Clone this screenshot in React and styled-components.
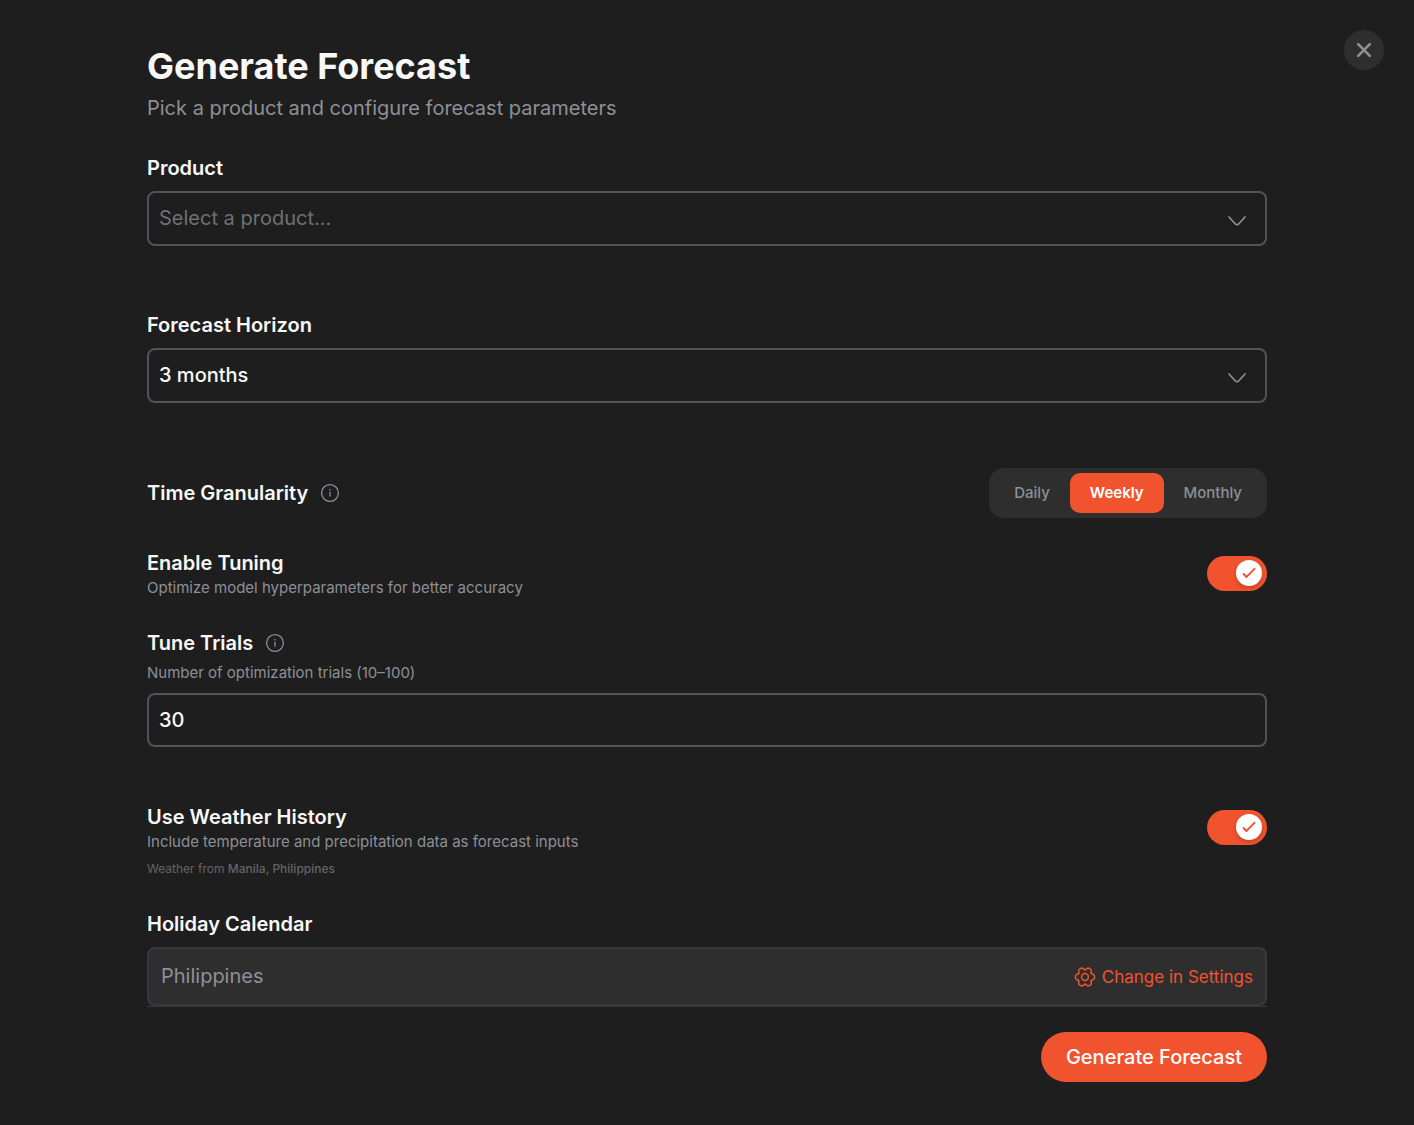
import React, { useState } from 'react';
import styled, { createGlobalStyle } from 'styled-components';

const theme = {
	background: '#1e1e1e',
	surface: '#2e2e2e',
	border: '#50545a',
	borderMuted: '#363a3f',
	white: '#f8f8f8',
	grey: '#8d9097',
	placeholder: '#6f7175',
	darkGrey: '#636468',
	orange: '#f1532f',
};

const GlobalStyle = createGlobalStyle`
	*, *::before, *::after {
		box-sizing: border-box;
	}
	body {
		margin: 0;
		background: ${theme.background};
		color: ${theme.white};
		font-family: 'Inter', sans-serif;
	}
	button, input, select {
		font-family: inherit;
		margin: 0;
	}
	h1, p {
		margin: 0;
	}
`;

const Modal = styled.main`
	position: relative;
	min-height: 100vh;
	padding: 44px 32px;
	background: ${theme.background};
`;

const CloseButton = styled.button`
	position: absolute;
	top: 30px;
	right: 30px;
	display: flex;
	align-items: center;
	justify-content: center;
	width: 40px;
	height: 40px;
	padding: 0;
	border: 0;
	border-radius: 50%;
	background: ${theme.surface};
	color: ${theme.grey};
	cursor: pointer;
`;

const Form = styled.form`
	display: flex;
	flex-direction: column;
	max-width: 1120px;
	margin: 0 auto;
`;

const Header = styled.header`
	margin-bottom: 25px;

	h1 {
		font-size: 36px;
		font-weight: 700;
		line-height: 44px;
	}
	p {
		color: ${theme.grey};
		font-size: 20px;
		line-height: 40px;
	}
`;

const Field = styled.div`
	display: flex;
	flex-direction: column;
	margin-bottom: ${props => props.$gap}px;
`;

const Row = styled.div`
	display: flex;
	align-items: center;
	justify-content: space-between;
	margin-bottom: ${props => props.$gap}px;
`;

const LabelRow = styled.div`
	display: flex;
	align-items: center;
	gap: 12px;
	color: ${theme.grey};
`;

const Label = styled.label`
	color: ${theme.white};
	font-size: 20px;
	font-weight: 600;
	line-height: 30px;
`;

const Hint = styled.p`
	color: ${theme.grey};
	font-size: 15px;
	line-height: ${props => props.$line || 20}px;
`;

const Note = styled.p`
	color: ${theme.darkGrey};
	font-size: 12px;
	line-height: 20px;

	strong {
		font-weight: 500;
	}
`;

const SelectBox = styled.div`
	display: grid;
	align-items: center;
	margin-top: 8px;
	color: ${theme.grey};

	> * {
		grid-area: 1 / 1;
	}
	svg {
		justify-self: end;
		margin-right: 20px;
		margin-top: 4px;
		pointer-events: none;
	}
`;

const Select = styled.select`
	appearance: none;
	width: 100%;
	height: 55px;
	padding: 0 48px 2px 10px;
	border: 2px solid ${theme.border};
	border-radius: 8px;
	background: ${theme.background};
	color: ${props => (props.$empty ? theme.placeholder : theme.white)};
	font-size: 20px;
	font-weight: ${props => (props.$empty ? 400 : 500)};
`;

const Input = styled.input`
	width: 100%;
	height: 54px;
	margin-top: 5px;
	padding: 0 10px;
	border: 2px solid ${theme.border};
	border-radius: 8px;
	background: ${theme.background};
	color: ${theme.white};
	font-size: 20px;
	font-weight: 500;
`;

const Segmented = styled.div`
	display: flex;
	padding: 5px;
	border-radius: 15px;
	background: ${theme.surface};
`;

const Segment = styled.button`
	height: 40px;
	padding: 0 20px 2px;
	border: 0;
	border-radius: 10px;
	background: ${props => (props.$active ? theme.orange : 'transparent')};
	color: ${props => (props.$active ? '#fff' : theme.grey)};
	font-size: 15px;
	font-weight: ${props => (props.$active ? 600 : 500)};
	cursor: pointer;
`;

const Switch = styled.span`
	display: grid;
	width: 60px;
	height: 35px;
	border-radius: 18px;
	background: ${props => (props.$on ? theme.orange : theme.surface)};

	> * {
		grid-area: 1 / 1;
	}
	input {
		width: 100%;
		height: 100%;
		opacity: 0;
		cursor: pointer;
	}
`;

const Thumb = styled.span`
	display: flex;
	align-items: center;
	justify-content: center;
	align-self: center;
	justify-self: ${props => (props.$on ? 'end' : 'start')};
	width: 26px;
	height: 26px;
	margin: 0 5px;
	border-radius: 50%;
	background: #fff;
	box-shadow: 0 2px 4px rgba(0, 0, 0, 0.2);
	color: ${theme.orange};
	pointer-events: none;
`;

const LockedBox = styled.div`
	display: flex;
	align-items: center;
	justify-content: space-between;
	height: 59px;
	margin-top: 8px;
	padding: 0 12px;
	border: 2px solid ${theme.borderMuted};
	border-radius: 8px;
	background: ${theme.surface};

	input {
		flex: 1;
		min-width: 0;
		padding: 0 0 2px;
		border: 0;
		background: transparent;
		color: ${theme.grey};
		font-size: 20px;
	}
`;

const SettingsLink = styled.a`
	display: flex;
	align-items: center;
	gap: 6px;
	color: ${theme.orange};
	font-size: 17px;
	line-height: 26px;
	text-decoration: none;
`;

const Footer = styled.footer`
	display: flex;
	justify-content: flex-end;
	padding-top: 25px;
	border-top: 1px solid ${theme.borderMuted};
`;

const SubmitButton = styled.button`
	height: 50px;
	padding: 0 25px;
	border: 0;
	border-radius: 25px;
	background: ${theme.orange};
	color: #fff;
	font-size: 20px;
	font-weight: 500;
	cursor: pointer;
`;

const CloseIcon = () => (
	<svg width="16" height="16" viewBox="0 0 16 16" fill="none" stroke="currentColor" strokeWidth="2.6" strokeLinecap="round">
		<path d="M2.2 2.2l11.6 11.6M13.8 2.2L2.2 13.8" />
	</svg>
);

const ChevronIcon = () => (
	<svg width="20" height="12" viewBox="0 0 20 12" fill="none" stroke="currentColor" strokeWidth="1.7" strokeLinecap="round" strokeLinejoin="round">
		<path d="M2 2l6.4 7a2.2 2.2 0 0 0 3.2 0L18 2" />
	</svg>
);

const InfoIcon = () => (
	<svg width="20" height="20" viewBox="0 0 20 20" fill="none" stroke="currentColor" strokeWidth="1.3">
		<circle cx="10" cy="10" r="8.4" />
		<path d="M10 8.8v4.8M10 6v1.6" />
	</svg>
);

const CheckIcon = () => (
	<svg width="14" height="12" viewBox="0 0 14 12" fill="none" stroke="currentColor" strokeWidth="1.9" strokeLinecap="round" strokeLinejoin="round">
		<path d="M1.6 7l2.8 3L12.4 1.8" />
	</svg>
);

const GearIcon = () => (
	<svg width="22" height="22" viewBox="-11 -11 22 22" fill="none" stroke="currentColor" strokeWidth="1.5" strokeLinecap="round">
		<circle r="3.4" />
		{[0, 60, 120, 180, 240, 300].map(angle => (
			<path
				key={angle}
				transform={`rotate(${angle})`}
				d="M6.3 -3.65C6.8 -2.8 7.6 -2.8 8.4 -2.5Q9.6 -2 9.6 0T8.4 2.5C7.6 2.8 6.8 2.8 6.3 3.65"
			/>
		))}
	</svg>
);

const Toggle = ({ id, checked, onChange }) => (
	<Switch $on={checked}>
		<input id={id} type="checkbox" checked={checked} onChange={e => onChange(e.target.checked)} />
		<Thumb $on={checked}>{checked && <CheckIcon />}</Thumb>
	</Switch>
);

const App = () => {
	const [product, setProduct] = useState('');
	const [horizon, setHorizon] = useState('3');
	const [granularity, setGranularity] = useState('Weekly');
	const [tuning, setTuning] = useState(true);
	const [trials, setTrials] = useState('30');
	const [weather, setWeather] = useState(true);

	return (
		<Modal>
			<GlobalStyle />
			<CloseButton type="button" aria-label="Close">
				<CloseIcon />
			</CloseButton>
			<Form onSubmit={e => e.preventDefault()}>
				<Header>
					<h1>Generate Forecast</h1>
					<p>Pick a product and configure forecast parameters</p>
				</Header>

				<Field $gap={64}>
					<Label htmlFor="product">Product</Label>
					<SelectBox>
						<Select id="product" $empty={!product} value={product} onChange={e => setProduct(e.target.value)}>
							<option value="">Select a product...</option>
						</Select>
						<ChevronIcon />
					</SelectBox>
				</Field>

				<Field $gap={65}>
					<Label htmlFor="horizon">Forecast Horizon</Label>
					<SelectBox>
						<Select id="horizon" value={horizon} onChange={e => setHorizon(e.target.value)}>
							<option value="3">3 months</option>
						</Select>
						<ChevronIcon />
					</SelectBox>
				</Field>

				<Row $gap={30}>
					<LabelRow>
						<Label as="span" id="granularity">Time Granularity</Label>
						<InfoIcon />
					</LabelRow>
					<Segmented role="group" aria-labelledby="granularity">
						{['Daily', 'Weekly', 'Monthly'].map(name => (
							<Segment
								key={name}
								type="button"
								$active={name === granularity}
								aria-pressed={name === granularity}
								onClick={() => setGranularity(name)}
							>
								{name}
							</Segment>
						))}
					</Segmented>
				</Row>

				<Row $gap={30}>
					<div>
						<Label htmlFor="tuning">Enable Tuning</Label>
						<Hint>Optimize model hyperparameters for better accuracy</Hint>
					</div>
					<Toggle id="tuning" checked={tuning} onChange={setTuning} />
				</Row>

				<Field $gap={55}>
					<LabelRow>
						<Label htmlFor="trials">Tune Trials</Label>
						<InfoIcon />
					</LabelRow>
					<Hint $line={30}>Number of optimization trials (10–100)</Hint>
					<Input id="trials" inputMode="numeric" value={trials} onChange={e => setTrials(e.target.value)} />
				</Field>

				<Field $gap={30}>
					<Row $gap={7}>
						<div>
							<Label htmlFor="weather">Use Weather History</Label>
							<Hint>Include temperature and precipitation data as forecast inputs</Hint>
						</div>
						<Toggle id="weather" checked={weather} onChange={setWeather} />
					</Row>
					<Note>
						Weather from <strong>Manila, Philippines</strong>
					</Note>
				</Field>

				<Field $gap={0}>
					<Label htmlFor="holiday">Holiday Calendar</Label>
					<LockedBox>
						<input id="holiday" value="Philippines" readOnly />
						<SettingsLink href="#settings">
							<GearIcon />
							Change in Settings
						</SettingsLink>
					</LockedBox>
				</Field>

				<Footer>
					<SubmitButton type="submit">Generate Forecast</SubmitButton>
				</Footer>
			</Form>
		</Modal>
	);
};

export default App;
